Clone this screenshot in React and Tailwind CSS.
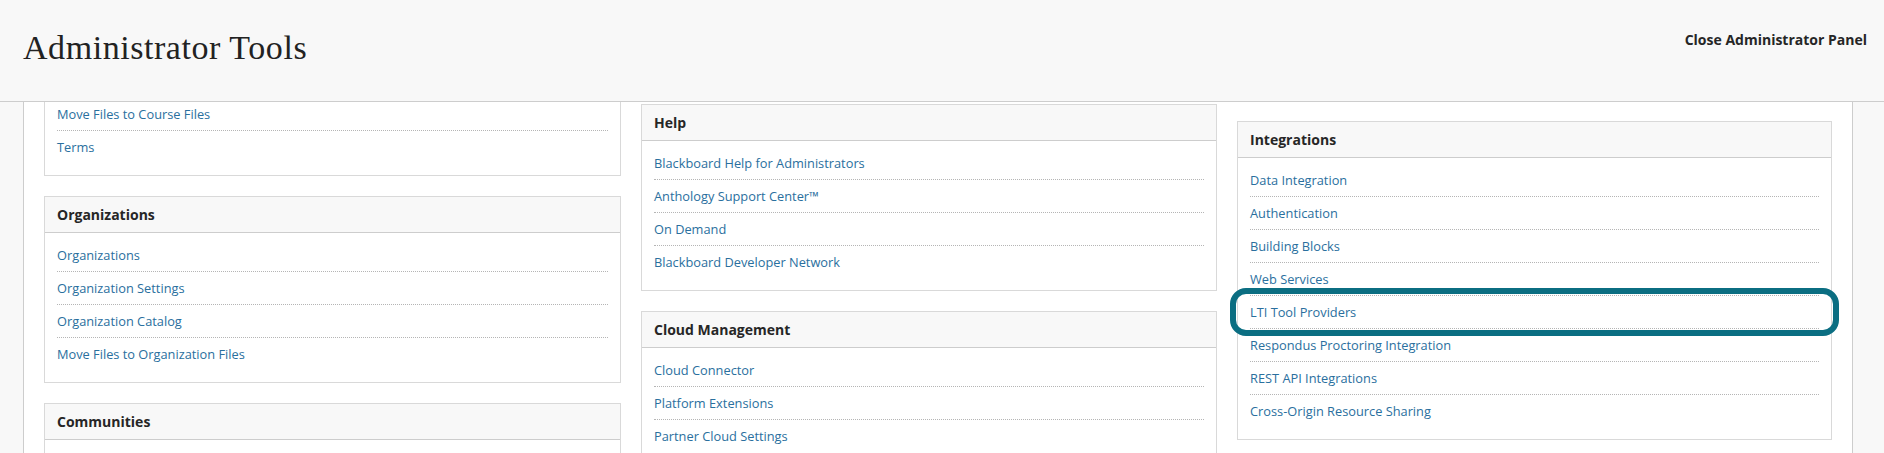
const columns = [
  {
    pad: "pt-0",
    cards: [
      { items: ["Move Files to Course Files", "Terms"], clipped: true },
      { title: "Organizations", items: ["Organizations", "Organization Settings", "Organization Catalog", "Move Files to Organization Files"] },
      { title: "Communities", items: [] },
    ],
    width: "w-[577px]",
  },
  {
    pad: "pt-[2px]",
    cards: [
      { title: "Help", items: ["Blackboard Help for Administrators", "Anthology Support Center™", "On Demand", "Blackboard Developer Network"] },
      { title: "Cloud Management", items: ["Cloud Connector", "Platform Extensions", "Partner Cloud Settings"] },
    ],
    width: "w-[576px]",
  },
  {
    pad: "pt-[19px]",
    cards: [
      { title: "Integrations", items: ["Data Integration", "Authentication", "Building Blocks", "Web Services", "LTI Tool Providers", "Respondus Proctoring Integration", "REST API Integrations", "Cross-Origin Resource Sharing"] },
    ],
    width: "w-[595px]",
  },
];

function Card({ title, items, clipped }) {
  return (
    <section className={`shrink-0 border border-[#d9d9d9] bg-white ${clipped ? "border-t-0" : ""} ${items.length === 0 ? "min-h-[80px]" : ""}`}>
      {title && (
        <h2 className="flex h-[36px] items-center border-b border-[#cdcdcd] bg-[#f8f8f8] px-[12px] text-[14px] font-bold text-[#262626]">
          {title}
        </h2>
      )}
      {items.length > 0 && (
        <ul className={`mx-[12px] pb-[11px] ${clipped ? "-mt-[4px]" : "pt-[6px]"}`}>
          {items.map((item, i) => (
            <li
              key={item}
              className={`flex h-[33px] items-center border-b border-dotted pt-[1px] text-[12.8px] text-[#2a6f9e] ${i < items.length - 1 ? "border-[#b5b5b5]" : "border-transparent"}`}
            >
              {item}
            </li>
          ))}
        </ul>
      )}
    </section>
  );
}

export default function App() {
  return (
    <div className="flex h-[453px] w-[1884px] flex-col overflow-hidden bg-[#f8f8f8] font-['Open_Sans',sans-serif]">
      <header className="relative z-10 flex h-[102px] shrink-0 items-start justify-between border-b border-[#cdcdcd] bg-[#f8f8f8] pl-[23px] pr-[17px]">
        <h1 className="mt-[28px] font-['Liberation_Serif',serif] text-[34px] leading-[40px] tracking-[0.55px] text-[#222222]">
          Administrator Tools
        </h1>
        <a className="mt-[30px] text-[14px] font-bold leading-[20px] text-[#262626]">Close Administrator Panel</a>
      </header>
      <main className="relative ml-[23px] mr-[31px] flex flex-1 gap-[20px] overflow-hidden border-x border-[#cdcdcd] bg-white pl-[20px]">
        {columns.map((col, i) => (
          <div key={i} className={`flex shrink-0 flex-col gap-[20px] ${col.pad} ${col.width}`}>
            {col.cards.map((card, j) => (
              <Card key={j} {...card} />
            ))}
          </div>
        ))}
        <div className="absolute left-[1206px] top-[186px] h-[48px] w-[609px] rounded-[16px] border-[6px] border-[#0b6e82]" />
      </main>
    </div>
  );
}
